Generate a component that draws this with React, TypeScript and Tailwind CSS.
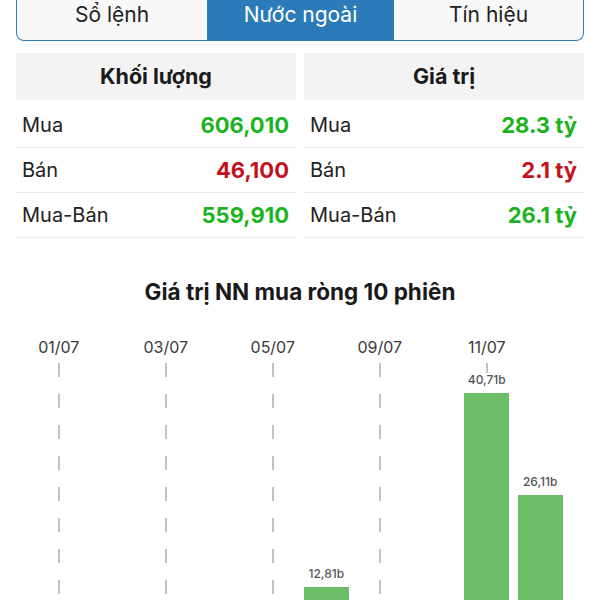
import React from 'react';

/* ─── Data ─── */
const tabs = ['Sổ lệnh', 'Nước ngoài', 'Tín hiệu'];

type Row = { label: string; value: string; up: boolean };

const volumeRows: Row[] = [
  { label: 'Mua', value: '606,010', up: true },
  { label: 'Bán', value: '46,100', up: false },
  { label: 'Mua-Bán', value: '559,910', up: true },
];

const valueRows: Row[] = [
  { label: 'Mua', value: '28.3 tỷ', up: true },
  { label: 'Bán', value: '2.1 tỷ', up: false },
  { label: 'Mua-Bán', value: '26.1 tỷ', up: true },
];

const sessions: { date: string; value: number | null }[] = [
  { date: '01/07', value: null },
  { date: '02/07', value: null },
  { date: '03/07', value: null },
  { date: '04/07', value: null },
  { date: '05/07', value: null },
  { date: '08/07', value: 12.81 },
  { date: '09/07', value: null },
  { date: '10/07', value: null },
  { date: '11/07', value: 40.71 },
  { date: '12/07', value: 26.11 },
];

const PX_PER_B = 6.95;

/* ─── Pieces ─── */
function StatTable({ title, rows }: { title: string; rows: Row[] }) {
  return (
    <div>
      <div className="mb-[3px] flex h-[47px] items-center justify-center bg-[#f3f3f3] text-[21.5px] font-bold text-[#1a1a1a]">
        {title}
      </div>
      {rows.map((r) => (
        <div
          key={r.label}
          className="flex h-[45px] items-center justify-between border-b border-[#ececec] pl-[6px] pr-[7px]"
        >
          <span className="text-[20px] text-[#222]">{r.label}</span>
          <span className={`text-[22px] font-bold ${r.up ? 'text-[#1cb322]' : 'text-[#c4121c]'}`}>
            {r.value}
          </span>
        </div>
      ))}
    </div>
  );
}

function DashedLine() {
  return (
    <svg className="absolute left-1/2 top-0 h-full w-[2px] -translate-x-1/2" preserveAspectRatio="none">
      <line x1="1" y1="0" x2="1" y2="100%" stroke="#c2c2c2" strokeWidth="2" strokeDasharray="14 17" />
    </svg>
  );
}

/* ─── App ─── */
export default function App() {
  return (
    <div className="h-[600px] w-[600px] overflow-hidden bg-white font-[family-name:Inter,sans-serif]">
      {/* Tabs */}
      <div className="mx-4 flex h-[41px] overflow-hidden rounded-b-[8px] border-x-[1.5px] border-b-[1.5px] border-[#2b7bb9] bg-[#f8f8f8]">
        {tabs.map((t, i) => (
          <div
            key={t}
            className={`flex justify-center pt-[2px] text-[21px] leading-[26px] ${
              i === 0 ? 'w-[190px] text-[#222]' : i === 1 ? 'w-[187px] bg-[#2b7bb9] text-white' : 'flex-1 text-[#222]'
            }`}
          >
            {t}
          </div>
        ))}
      </div>

      {/* Stats */}
      <div className="mx-4 mt-3 grid grid-cols-2 gap-2">
        <StatTable title="Khối lượng" rows={volumeRows} />
        <StatTable title="Giá trị" rows={valueRows} />
      </div>

      {/* Chart */}
      <div className="mt-[42px] text-center text-[22.5px] font-bold leading-[24px] text-[#1a1a1a]">
        Giá trị NN mua ròng 10 phiên
      </div>

      <div className="ml-[32px] mt-[33px] flex w-[535px]">
        {sessions.map((s, i) => {
          const labeled = i % 2 === 0;
          return (
            <div key={s.date} className="flex w-[53.5px] flex-col items-center">
              <div className="h-[20px] text-[16px] leading-[20px] text-[#3a3a3a]">{labeled ? s.date : ''}</div>
              <div className="relative mt-[6px] flex h-[313px] w-full flex-col items-center justify-end">
                {labeled && <DashedLine />}
                {s.value !== null && (
                  <div className="relative flex flex-col items-center">
                    <div className="bg-white px-[2px] pb-[6px] text-[12px] font-medium leading-[14px] text-[#555]">
                      {s.value.toFixed(2).replace('.', ',')}b
                    </div>
                    <div className="w-[45px] bg-[#6cbd68]" style={{ height: s.value * PX_PER_B }} />
                  </div>
                )}
              </div>
            </div>
          );
        })}
      </div>
    </div>
  );
}
